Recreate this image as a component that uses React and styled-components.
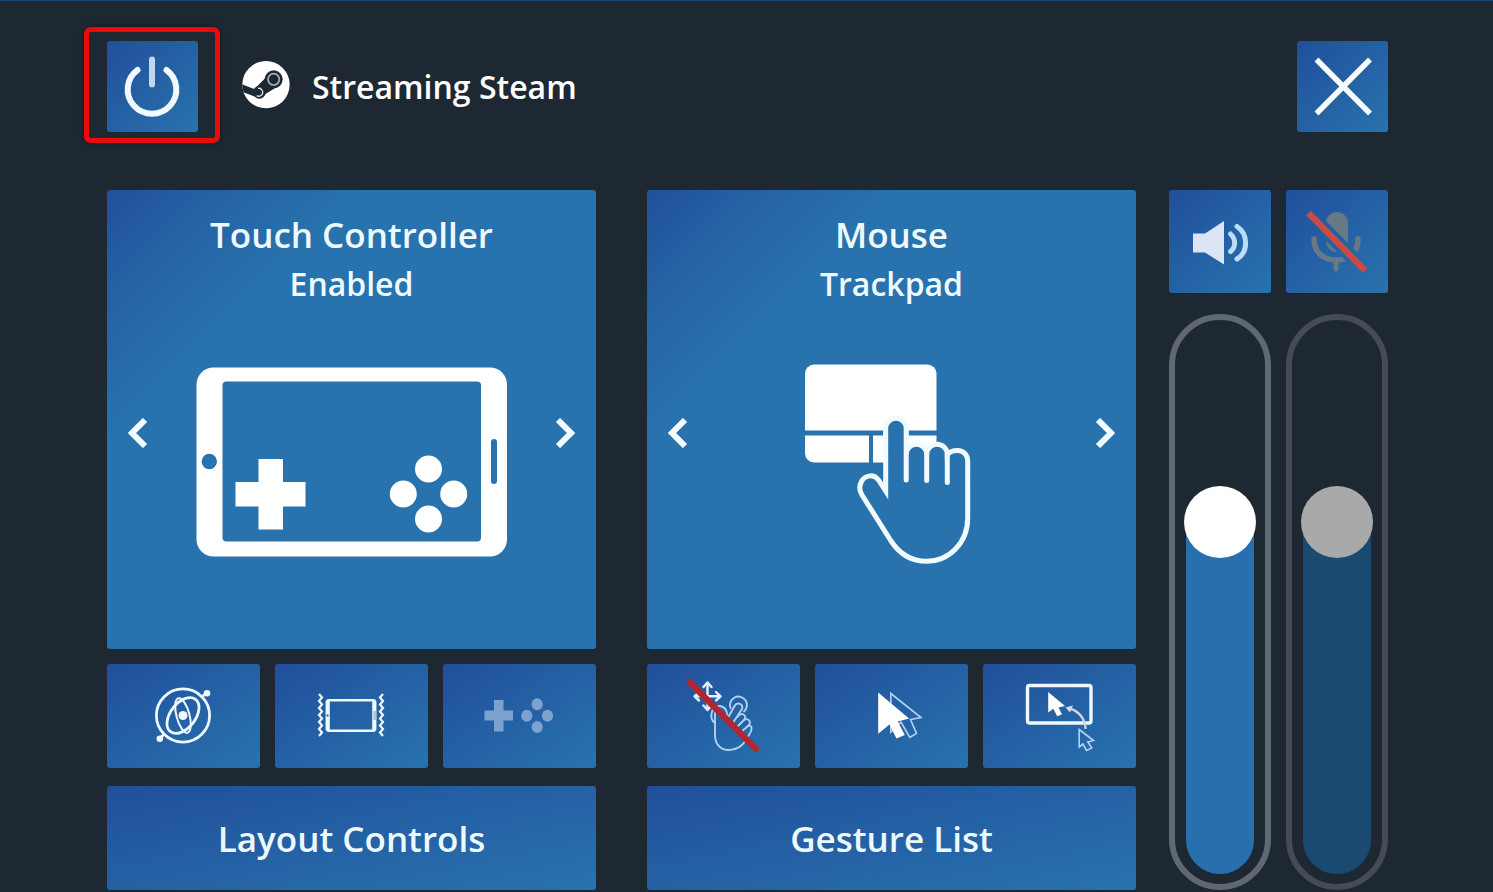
import { useState } from "react";
import styled, { createGlobalStyle } from "styled-components";

const CARD_BLUE = "#2873ad";
const BACKGROUND = "#1e2833";

function App() {
  const [volume, setVolume] = useState(67);
  const [mic, setMic] = useState(67);

  return (
    <Page>
      <GlobalStyle />
      <Header>
        <PowerSlot>
          <SquareButton aria-label="Stop streaming">
            <PowerIcon />
          </SquareButton>
          <Highlight />
        </PowerSlot>
        <SteamIcon />
        <Title>Streaming Steam</Title>
        <SquareButton aria-label="Close">
          <CloseIcon />
        </SquareButton>
      </Header>

      <Main>
        <Columns>
          <Column>
            <ModeCard
              title="Touch Controller"
              mode="Enabled"
              picture={<DevicePicture />}
            />
            <Tiles>
              <Tile aria-label="Gyro">
                <GyroIcon />
              </Tile>
              <Tile aria-label="Vibration">
                <VibrationIcon />
              </Tile>
              <Tile aria-label="Touch buttons">
                <PadIcon />
              </Tile>
            </Tiles>
            <WideButton>Layout Controls</WideButton>
          </Column>

          <Column>
            <ModeCard
              title="Mouse"
              mode="Trackpad"
              picture={<TrackpadPicture />}
            />
            <Tiles>
              <Tile aria-label="Gestures off">
                <GestureOffIcon />
              </Tile>
              <Tile aria-label="Pointer speed">
                <PointerIcon />
              </Tile>
              <Tile aria-label="Move pointer to screen">
                <ScreenPointerIcon />
              </Tile>
            </Tiles>
            <WideButton>Gesture List</WideButton>
          </Column>
        </Columns>

        <Levels>
          <Level label="Volume" icon={<SpeakerIcon />} value={volume} onChange={setVolume} />
          <Level label="Microphone" icon={<MicOffIcon />} value={mic} onChange={setMic} muted />
        </Levels>
      </Main>
    </Page>
  );
}

function ModeCard({ title, mode, picture }) {
  return (
    <Card>
      <CardTitle>{title}</CardTitle>
      <CardMode>{mode}</CardMode>
      <CardBody>
        <ArrowButton aria-label={`Previous ${title} mode`}>
          <svg width="20" height="30" viewBox="0 0 20 30">
            <path d="M17 2 4 15 17 28" {...arrow} />
          </svg>
        </ArrowButton>
        {picture}
        <ArrowButton aria-label={`Next ${title} mode`}>
          <svg width="20" height="30" viewBox="0 0 20 30">
            <path d="M3 2 16 15 3 28" {...arrow} />
          </svg>
        </ArrowButton>
      </CardBody>
    </Card>
  );
}

function Level({ label, icon, value, onChange, muted }) {
  // the fill ends behind the middle of the 72px thumb
  const fill = `calc(36px + (100% - 72px) * ${value / 100})`;

  return (
    <LevelColumn>
      <LevelButton aria-label={`${label} on or off`}>{icon}</LevelButton>
      <Track $muted={muted}>
        <Range
          type="range"
          min="0"
          max="100"
          aria-label={label}
          value={value}
          $muted={muted}
          style={{ "--fill": fill }}
          onChange={(e) => onChange(Number(e.target.value))}
        />
      </Track>
    </LevelColumn>
  );
}

const arrow = { fill: "none", stroke: "#f4fbff", strokeWidth: 6 };
const iconBox = { width: 80, height: 80, viewBox: "0 0 80 80", fill: "none" };

const PowerIcon = () => (
  <svg width="91" height="91" viewBox="0 0 91 91" fill="none" strokeWidth="6" strokeLinecap="round">
    <path d="M30.5 29a24.3 24.3 0 1 0 29 0" stroke="#f2faff" />
    <path d="M45 18.5v25" stroke="#c3d6ef" />
  </svg>
);

const SteamIcon = () => (
  <Logo viewBox="18 18 150 150" aria-hidden="true">
    <clipPath id="disc">
      <circle cx="90" cy="86" r="71" />
    </clipPath>
    <g clipPath="url(#disc)">
      <path d="M0 0h180v180H0z" fill="#fff" />
      <g fill={BACKGROUND}>
        <path d="M10 82 62 102 62 124 10 104z" />
        <path d="M88 66 62 92 72 126 92 112 118 96z" />
        <circle cx="113" cy="70" r="27" />
        <circle cx="70" cy="109" r="19" />
      </g>
    </g>
    <circle cx="113" cy="70" r="17" fill="none" stroke="#a9b0b8" strokeWidth="5" />
    <path d="M66 97a12 12 0 1 1-4 22" fill="none" stroke="#dfe3e8" strokeWidth="4" />
  </Logo>
);

const CloseIcon = () => (
  <svg width="91" height="91" viewBox="0 0 91 91" fill="none" stroke="#f6fcff" strokeWidth="5.5">
    <path d="M19.5 18.5 73 72.5M73 18.5 19.5 72.5" />
  </svg>
);

const DevicePicture = () => (
  <Picture viewBox="195 358 312 208">
    <rect x="195.5" y="367.5" width="310.5" height="189" rx="17" fill="#fff" />
    <rect x="221.5" y="381.5" width="258.5" height="160" rx="4" fill={CARD_BLUE} />
    <circle cx="208.3" cy="461.5" r="7.7" fill={CARD_BLUE} />
    <path d="M493 442v39" stroke={CARD_BLUE} strokeWidth="6" strokeLinecap="round" />
    <path d="M257.5 459h24.5v23h22.5v24.5H282v23h-24.5v-23h-23V482h23z" fill="#fff" />
    <g fill="#fff">
      <circle cx="427.5" cy="469" r="13.5" />
      <circle cx="402.3" cy="494" r="13.5" />
      <circle cx="452.7" cy="494" r="13.5" />
      <circle cx="427.5" cy="519" r="13.5" />
    </g>
  </Picture>
);

const TrackpadPicture = () => (
  <Picture viewBox="735 358 312 208">
    <path d="M813 364.5h113.5a9 9 0 0 1 9 9V430.5H804V373.5a9 9 0 0 1 9-9z" fill="#fff" />
    <path d="M804 435.5h64V462.5H813a9 9 0 0 1-9-9z" fill="#fff" />
    <path d="M872 435.5h63.5v18H872z" fill="#fff" />
    <path d="M872 450h13v12.5h-13z" fill="#fff" />
    <path d="M882.3 425h25v20h-25z" fill="#fff" />
    <g stroke="#f0faff" strokeWidth="5" strokeLinecap="round">
      <path
        fill={CARD_BLUE}
        strokeMiterlimit="10"
        d="M884.7 491V428.5a10.25 10.25 0 0 1 20.5 0v26a10.25 10.25 0 0 1 20.5 0a10.3 10.3 0 0 1 20.6 0C948.5 452 952 450.5 956.5 450.5C962.5 450.5 966.7 455 966.7 461V518C966.7 543 948 561.3 925.5 561.3C910 561.3 898 553 890 541L861 495C858.5 491 858 486 860.5 481.5C864.5 474.5 873 474 877.5 480z"
      />
      <path fill="none" d="M905.2 454v26M925.7 454v26.5M946.3 454v28.5" />
    </g>
  </Picture>
);

const GyroIcon = () => (
  <svg {...iconBox} stroke="#eef8ff" strokeWidth="2.8">
    <circle cx="39" cy="39.5" r="26.6" />
    <ellipse cx="39" cy="39.5" rx="12.5" ry="20.5" transform="rotate(38 39 39.5)" />
    <ellipse cx="39" cy="39.5" rx="6.5" ry="17.8" strokeWidth="2" transform="rotate(-15 39 39.5)" />
    <path d="m57 21.5 5-4M21 57.5l-5 4.5" />
    <g fill="#eef8ff" stroke="none">
      <circle cx="39" cy="39.5" r="4.5" />
      <circle cx="63" cy="17.3" r="3.3" />
      <circle cx="15.8" cy="62.7" r="3.3" />
    </g>
  </svg>
);

const VibrationIcon = () => (
  <svg {...iconBox} stroke="#eef8ff">
    <rect x="15" y="24.2" width="48" height="30.6" rx="2" strokeWidth="2.6" />
    <path d="M15.8 25v29" strokeWidth="4" />
    <path d="M62.2 25v29" strokeWidth="4" />
    <path d="M62.7 35v9" stroke="#a9c8e8" strokeWidth="3" />
    <path d="M15.5 38.5v2" stroke="#2460a4" strokeWidth="2" />
    <path d="m7 18 3 3.5-3 3.5 3 3.5-3 3.5 3 3.5-3 3.5 3 3.5-3 3.5 3 3.5-3 3.5 3 3.5-3 3.5" strokeWidth="2.2" />
    <path d="m71 18-3 3.5 3 3.5-3 3.5 3 3.5-3 3.5 3 3.5-3 3.5 3 3.5-3 3.5 3 3.5-3 3.5 3 3.5" strokeWidth="2.2" />
  </svg>
);

const PadIcon = () => (
  <svg {...iconBox}>
    <g fill="#7da2d0">
      <path d="M14 24h9.5v10.5H33v10H23.5V55.5H14V44.5H4.5v-10H14z" />
      <ellipse cx="57.2" cy="28.3" rx="5.6" ry="6" />
      <ellipse cx="46.8" cy="39.7" rx="5.6" ry="6" />
      <ellipse cx="67.5" cy="39.7" rx="5.6" ry="6" />
      <ellipse cx="57.2" cy="51" rx="5.6" ry="6" />
    </g>
  </svg>
);

const GestureOffIcon = () => (
  <svg {...iconBox} strokeLinecap="round" strokeLinejoin="round">
    <g stroke="#e6f3ff" strokeWidth="2.4">
      <path d="M23.5 8v24.5M11.5 20.3h24" />
      <path d="m19.5 11 4-4.5 4 4.5M32 16l4.5 4.3L32 24.5M15 16l-4.5 4.3L15 24.5M19.5 29.5l4 4.5 4-4.5" />
    </g>
    <g stroke="#b1d0f2" strokeWidth="1.9">
      <path d="M46.5 32A8.5 8.5 0 1 1 60 35.5" />
      <path d="M43 43.5 50.5 30C53 25.5 60 28 58 33L48.5 47.5" />
      <path d="M53.5 41C57 35.5 63.5 39 60.5 43.5L53 51" />
      <path d="M60 44C64 41.5 68 45.5 64.5 49.5L57 56" />
      <path d="M64 50C68.5 48.5 68.5 54 65.5 58C61 66 57 74 44 74C36 74 31 67.5 31 59V47C25 43 26.5 31 35 30C41 30 43.5 35 43 40" />
      <path d="M31 47V38C31 34 37.5 33 38.5 37L40 43" />
    </g>
    <path d="m5.8 6.3 66 66.4" stroke="#b5252f" strokeWidth="6.5" />
  </svg>
);

const PointerIcon = () => (
  <svg {...iconBox}>
    <path
      d="M38.8 17.5 69 41.5 58.5 43.5 64.5 57.5 57.8 61.5 49 46 38.8 56z"
      stroke="#b3d2f3"
      strokeWidth="1.6"
    />
    <path d="M26.2 16.5 57 42.5 45.8 45.5 52.8 59 44.5 62.5 37.5 48.5 26.2 57.7z" fill="#fff" />
  </svg>
);

const ScreenPointerIcon = () => (
  <svg {...iconBox}>
    <rect x="7.5" y="9.5" width="63.5" height="37.5" rx="2" stroke="#eef8ff" strokeWidth="3.4" />
    <path d="M28.2 16 45 30 38.5 31.5 42 38.2 37.2 40.3 33.3 32.8 28.2 36.5z" fill="#fff" />
    <path d="M65.5 53C65.5 43 58 34 49 32.5" stroke="#cfd3ea" strokeWidth="2.4" />
    <path d="M45.5 31.5 53 29.5 50 36.5z" fill="#d8dbee" />
    <path
      d="M59.2 53.5 73.5 64.5 67.8 66 71.8 72 66.5 74.5 63 68 59.2 71z"
      stroke="#b3d2f3"
      strokeWidth="1.6"
    />
  </svg>
);

const SpeakerIcon = () => (
  <svg {...iconBox} strokeLinecap="round">
    <path d="M13 31.5h12L44 19v43.5L25 50.5H13z" fill="#dbe5f5" />
    <g stroke="#bddcfa" strokeWidth="5">
      <path d="M50.5 32C56 37 56 45 50.5 49.5" />
      <path d="M57 24.5C68.5 32 68.5 50 57 57" />
    </g>
  </svg>
);

const MicOffIcon = () => (
  <svg {...iconBox} strokeLinecap="round">
    <mask id="slash-gap">
      <path d="M0 0h80v80H0z" fill="#fff" />
      <path d="m11.5 11 56.5 57.5" stroke="#000" strokeWidth="14" />
    </mask>
    <g mask="url(#slash-gap)">
      <rect x="29" y="10" width="22" height="40" rx="11" fill="#697887" />
      <path d="M17 37C17 51 27 58 39.5 58C52 58 61 51 61 37" stroke="#697887" strokeWidth="5.5" />
      <path d="M39 60v7" stroke="#697887" strokeWidth="5" />
    </g>
    <path d="m11.5 11 56.5 57.5" stroke="#cb4a42" strokeWidth="6.5" strokeLinecap="butt" />
  </svg>
);

const GlobalStyle = createGlobalStyle`
  * {
    box-sizing: border-box;
  }

  body {
    margin: 0;
    background-color: ${BACKGROUND};
    color: #ffffff;
    font-family: "Open Sans", "Noto Sans", sans-serif;
    font-weight: 600;
  }

  button {
    display: flex;
    align-items: center;
    justify-content: center;
    border: 0;
    padding: 0;
    color: inherit;
    font: inherit;
    cursor: pointer;
  }
`;

const Page = styled.div`
  display: flex;
  flex-direction: column;
  min-height: 100vh;
  padding: 40px 105px 2px 107px;
  border-top: 1px solid #1f4a74;
`;

const Header = styled.header`
  display: flex;
  align-items: center;
  padding-bottom: 58px;
`;

const PowerSlot = styled.div`
  position: relative;
  margin-right: 44px;
`;

const Highlight = styled.span`
  position: absolute;
  inset: -14px -22px -11px -23px;
  border: 5px solid #ec0b0b;
  border-radius: 7px;
  box-shadow: 0 0 6px rgba(0, 0, 0, 0.4);
  pointer-events: none;
`;

const Logo = styled.svg`
  width: 50px;
  height: 50px;
  margin-right: 20px;
  overflow: visible;
`;

const Title = styled.h1`
  flex: 1;
  margin: 0;
  font-size: 32px;
  font-weight: 600;
  line-height: 48px;
`;

const BlueButton = styled.button`
  border-radius: 3px;
  background-image: linear-gradient(to bottom right, #214f9b, #2873ae);
`;

const SquareButton = styled(BlueButton)`
  width: 91px;
  height: 91px;
`;

const Main = styled.main`
  flex: 1;
  display: flex;
  gap: 33px;
`;

const Columns = styled.div`
  flex: 1;
  display: grid;
  grid-template-columns: 1fr 1fr;
  gap: 51px;
`;

const Column = styled.section`
  display: flex;
  flex-direction: column;
`;

const Card = styled.div`
  flex: 1;
  display: flex;
  flex-direction: column;
  padding: 20px 21px 34px;
  border-radius: 3px;
  background-image: linear-gradient(135deg, #21509b, #2562a4 12%, ${CARD_BLUE} 27%);
  color: #eef9ff;
  text-align: center;
`;

const CardTitle = styled.h2`
  margin: 0;
  font-size: 35px;
  font-weight: 600;
  line-height: 49px;
`;

const CardMode = styled.p`
  margin: 0;
  font-size: 32px;
  line-height: 49px;
`;

const CardBody = styled.div`
  flex: 1;
  display: flex;
  align-items: center;
  justify-content: space-between;
`;

const Picture = styled.svg`
  width: 312px;
  height: 208px;
`;

const ArrowButton = styled.button`
  padding-bottom: 58px;
  background: none;
`;

const Tiles = styled.div`
  display: grid;
  grid-template-columns: repeat(3, 1fr);
  gap: 15px;
  padding: 15px 0 18px;
`;

const Tile = styled(BlueButton)`
  height: 104px;
`;

const WideButton = styled(BlueButton)`
  height: 104px;
  color: #eef9ff;
  font-size: 35px;
`;

const Levels = styled.div`
  display: grid;
  grid-template-columns: 102px 102px;
  gap: 15px;
`;

const LevelColumn = styled.div`
  display: flex;
  flex-direction: column;
  gap: 21px;
`;

const LevelButton = styled(BlueButton)`
  height: 103px;
`;

const Track = styled.div`
  flex: 1;
  display: flex;
  justify-content: center;
  padding: 10px 0;
  border: 6px solid ${(props) => (props.$muted ? "#454c55" : "#606873")};
  border-radius: 51px;
`;

const Range = styled.input`
  appearance: none;
  writing-mode: vertical-lr;
  direction: rtl;
  width: 72px;
  margin: 0;
  background: none;

  &::-webkit-slider-runnable-track {
    width: 68px;
    border-radius: 34px;
    background-image: linear-gradient(
      to top,
      ${(props) => (props.$muted ? "#1a4a72" : "#286fad")} var(--fill),
      transparent 0
    );
  }

  &::-webkit-slider-thumb {
    appearance: none;
    width: 72px;
    height: 72px;
    margin-left: -2px;
    border-radius: 50%;
    background-color: ${(props) => (props.$muted ? "#a9a9a9" : "#ffffff")};
  }
`;

export default App;
